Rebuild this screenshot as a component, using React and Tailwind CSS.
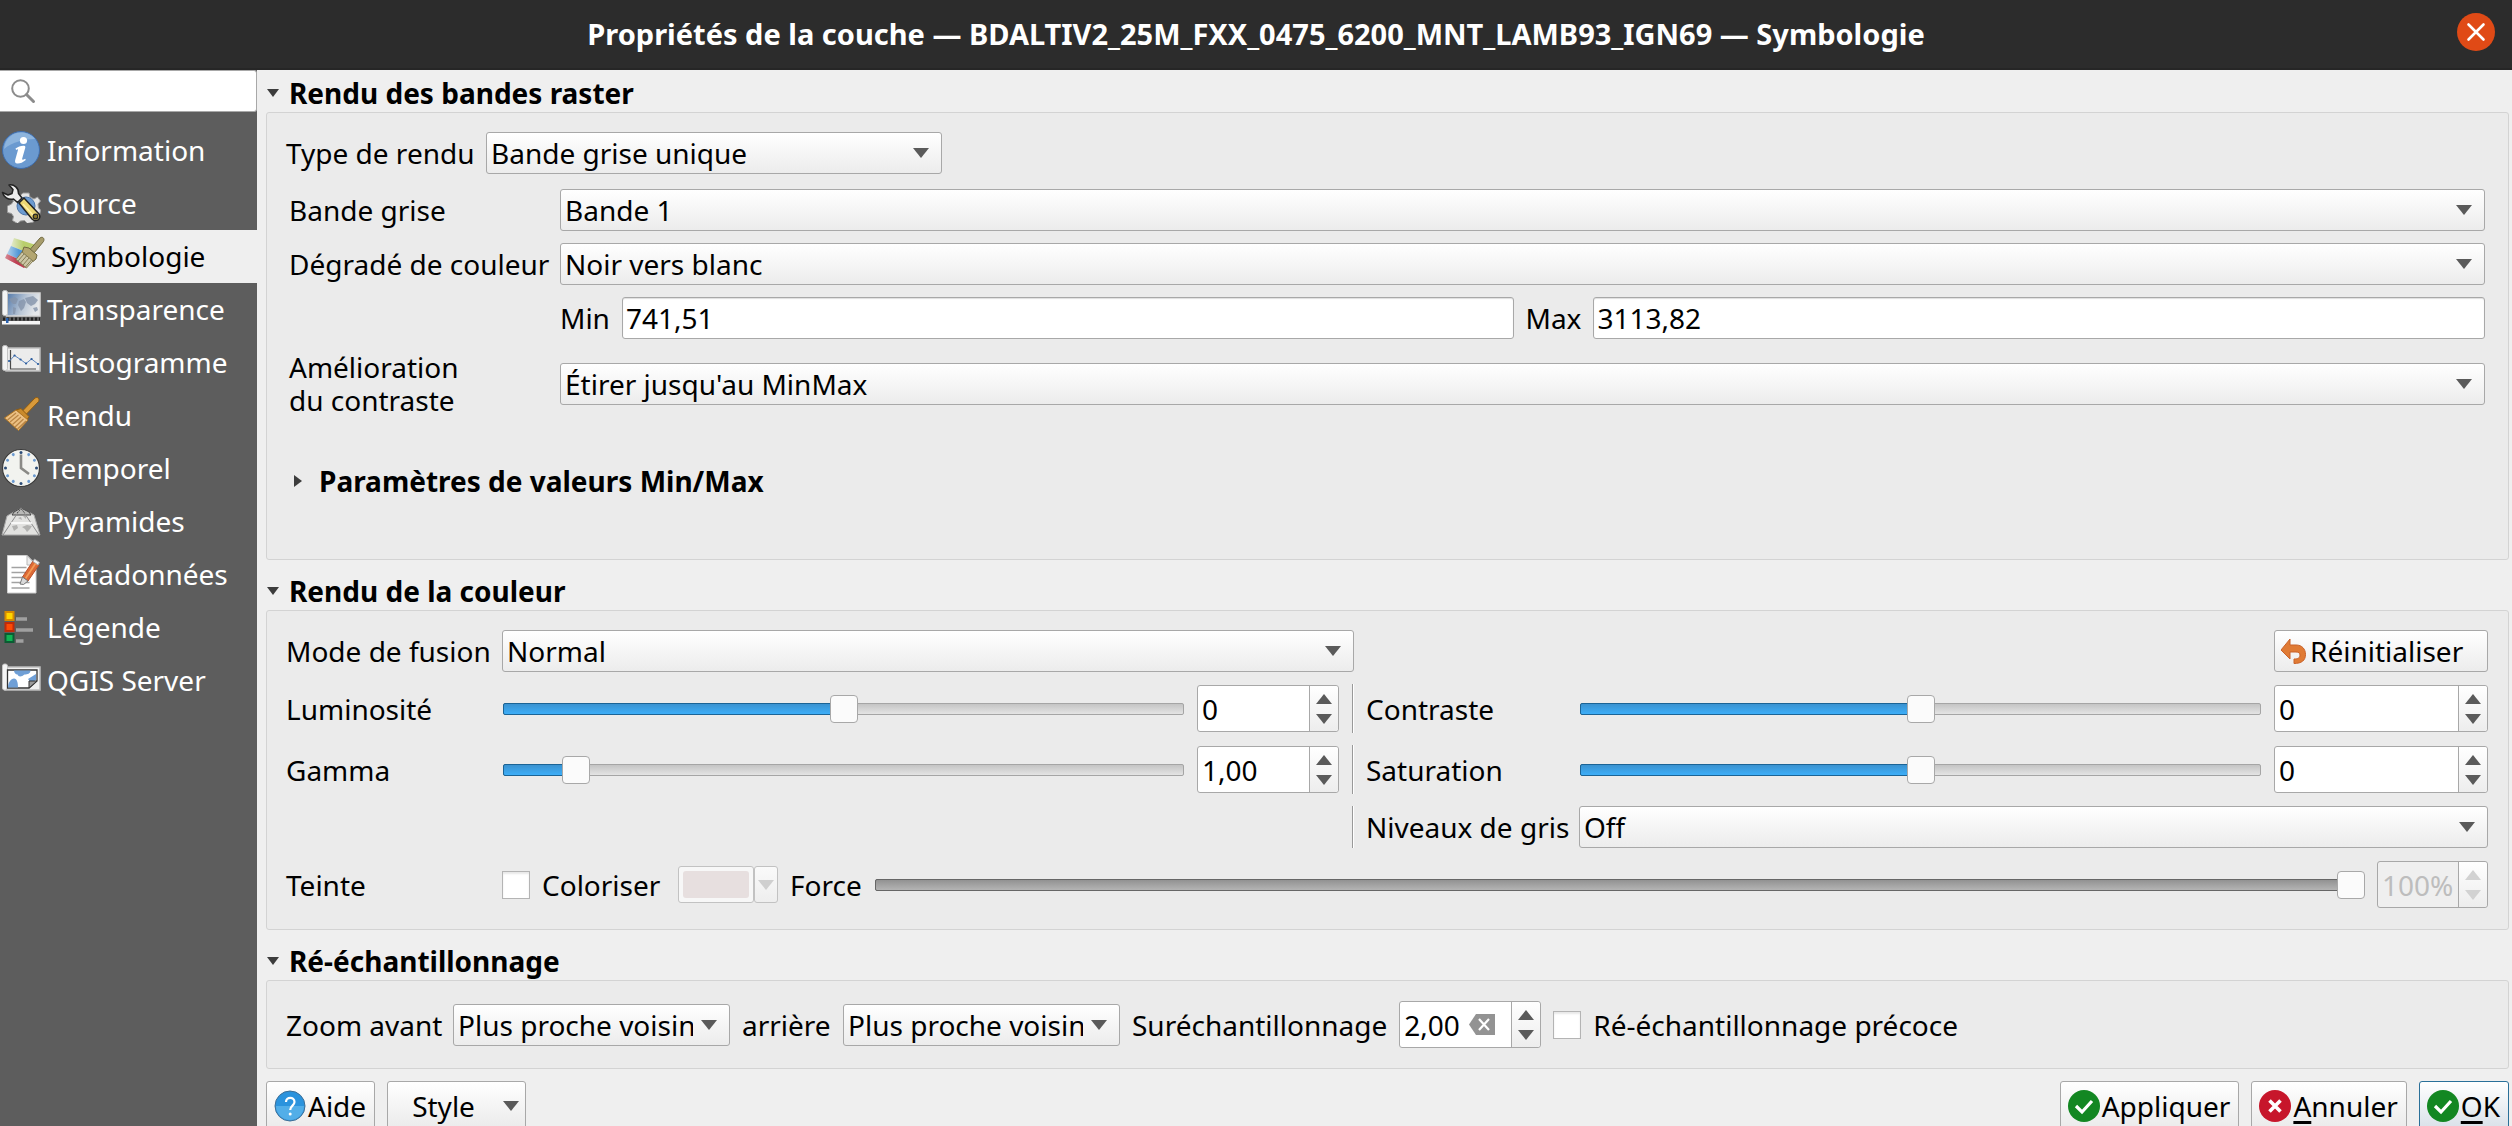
import React, { useState } from "react";

/* ---------- sidebar icons, 40 x 40 ---------- */

const Icon = ({ children }) => (
  <svg viewBox="0 0 40 40" className="h-10 w-10 shrink-0" aria-hidden="true">
    {children}
  </svg>
);

const InfoIcon = () => (
  <Icon>
    <circle cx="20" cy="20" r="18.5" fill="#6b9ad0" stroke="#3f6dac" strokeWidth="1" />
    <path d="M3 19C4 8 12 2.500 20 2.500c6 0 11 2.500 14 6.500C24 9 11 12 3 19z" fill="#8db4dd" />
    <circle cx="22.500" cy="10.500" r="3.600" fill="#fff" />
    <path d="M14.500 18.500c2.500-1.800 5.500-3 8.500-2.800 1.400.1 1.500 1.200 1.200 2.300l-3 10.500c-.4 1.500.6 1.500 3 .2l.6 1.300c-3.200 2.500-5.800 3.700-8.600 3.500-2-.2-2.500-1.500-2-3.500l2.700-9.700c.4-1.400-.3-1.400-1.800-.4z" fill="#fff" />
  </Icon>
);

const SourceIcon = () => (
  <Icon>
    <path
      d="M22 10h6l1 4 4 2 3.500-2 3 4-2.500 3 .5 4 2 2-1 6-4 0-2 3 0 3-6 1.500-3-3-4 .5-3 2.500-5-3 1-4-2-3-4-1V23l4-2 2-3-2-4 4-3 4 2z"
      fill="#e4e4e4"
      stroke="#9a9a9a"
      strokeWidth="1"
    />
    <circle cx="25" cy="23" r="9" fill="#6b9ad0" stroke="#4a74a8" />
    <path d="M18 20l5-5 15 16c2 3 0 7-4 6.500-1 0-2-.5-3-1.500z" fill="#ecd773" stroke="#222" strokeWidth="1.500" />
    <path d="M22 21l10 11" stroke="#fff0a8" strokeWidth="1.500" />
    <circle cx="34.500" cy="33.500" r="2.300" fill="#8a7625" stroke="#222" strokeWidth="1.200" />
    <path d="M8 2c5-1 10 3 9.500 8.500l3.500 4.500-4.500 4.500-4-3.500C7 17 2.500 14 1.500 9.500l5.500 2.500 4-1.500 1-4z" fill="#ececec" stroke="#222" strokeWidth="1.500" strokeLinejoin="round" />
  </Icon>
);

const SymbologyIcon = () => (
  <Icon>
    <defs>
      <linearGradient id="greenStripe" x1="0" y1="0" x2="1" y2="0">
        <stop offset="0" stopColor="#e4ebcf" />
        <stop offset=".5" stopColor="#b9ce6c" />
      </linearGradient>
      <linearGradient id="blueStripe" x1="0" y1="0" x2="1" y2="0">
        <stop offset="0" stopColor="#b5d3ec" />
        <stop offset=".5" stopColor="#4f96d6" />
      </linearGradient>
      <linearGradient id="redStripe" x1="0" y1="0" x2="1" y2="0">
        <stop offset="0" stopColor="#d88a95" />
        <stop offset=".5" stopColor="#bd3f53" />
      </linearGradient>
    </defs>
    <path d="M9 2l22 7-5 9L6 10z" fill="url(#greenStripe)" />
    <path d="M6 10l20 8-4 9L2 18z" fill="url(#blueStripe)" />
    <path d="M2 18l20 9-3 5L0 22z" fill="url(#redStripe)" />
    <path d="M0 22l22 10-1.500 0z" fill="#bd3f53" />
    <path d="M35 2c2.500-2 5 .5 3.500 3.500L29 17l-4-3.500z" fill="#a79c6c" stroke="#6f683f" strokeWidth="1" />
    <path d="M19 11l5 1 8 7-1 4-3 2.500-11-9z" fill="#b3a671" stroke="#6f683f" strokeWidth="1" />
    <path d="M17 16l11 9-6.500 7L11 23.500z" fill="#ccc6a5" stroke="#857d55" strokeWidth="1" />
    <path d="M19 18l-6 7M21.500 20l-6 7M24 22l-6 7M26.500 24l-6 7" stroke="#857d55" strokeWidth="1" />
  </Icon>
);

const TransparencyIcon = () => (
  <Icon>
    <defs>
      <linearGradient id="mapFade" x1="0" y1="0" x2="1" y2=".3">
        <stop offset="0" stopColor="#4f76a8" />
        <stop offset=".6" stopColor="#b9c6d6" />
        <stop offset="1" stopColor="#e6e8ea" />
      </linearGradient>
    </defs>
    <rect x="5.500" y="4" width="33.500" height="23" fill="url(#mapFade)" stroke="#d8d8d8" strokeWidth="1.500" />
    <path d="M8 10l6-2 3 2-2 5-3 0-2-2zM12 18l3 1-1 6h-2zM18 12l5-2 2 3-2 6-3 3-3-6zM24 9l8-2 5 4-3 4-4 2-4-3zM32 19l4-1 1 3-3 2z" fill="#8494aa" opacity=".8" />
    <rect x="1.500" y="1.500" width="5" height="25" rx="2" fill="#f4f4f4" stroke="#c4c4c4" />
    <path d="M2 30h37" stroke="#222" strokeWidth="3" strokeDasharray="2 2" />
    <rect x="1" y="32" width="38" height="3.500" fill="#f5f5f5" />
    <rect x="5" y="29" width="2.500" height="5" fill="#2a62b0" />
  </Icon>
);

const HistogramIcon = () => (
  <Icon>
    <rect x="5" y="6" width="34" height="23" fill="#ececec" stroke="#bdbdbd" strokeWidth="1.500" />
    <rect x="1.500" y="3.500" width="5" height="25" rx="2" fill="#f4f4f4" stroke="#c4c4c4" />
    <path d="M9.500 8v19H35" fill="none" stroke="#4a4a4a" strokeWidth="1.200" />
    <path d="M8.500 19l5-5.500 6 4 5.500 4 5.500-4.500 6.500 5" fill="none" stroke="#5b84bd" strokeWidth="1" />
    <path d="M8 19h.1M13.500 13.500h.1M19.500 17.500h.1M25 21.500h.1M30.500 17h.1M37 22h.1" stroke="#2f5f9f" strokeWidth="2.200" strokeLinecap="round" />
  </Icon>
);

const BrushIcon = () => (
  <Icon>
    <path d="M34 3c2.500-1.500 5 .5 3.500 3.500L24 20.500 20.500 17z" fill="#d99a3a" stroke="#8f5c12" strokeWidth="1" />
    <path d="M15 15l5-1.500 8 8L26 25z" fill="#c98a2c" stroke="#8f5c12" strokeWidth="1" />
    <path d="M15 15l12 10-9.500 10.500L3.500 23z" fill="#ecc083" stroke="#b07522" strokeWidth="1" />
    <path d="M15 18L6.500 25M17.500 20l-8.500 7M20 22l-8.500 7.500M22.500 24l-8.500 8M25 26l-8.500 8" stroke="#b98545" strokeWidth="1.200" />
  </Icon>
);

const CLOCK = [0, 30, 60, 90, 120, 150, 180, 210, 240, 270, 300, 330];
const ClockIcon = () => (
  <Icon>
    <circle cx="20" cy="20" r="18.500" fill="#f2f3ef" stroke="#3d3d3d" strokeWidth="1.200" />
    {CLOCK.map((a) => (
      <circle
        key={a}
        cx="20"
        cy="4.500"
        r="1.500"
        fill={a % 90 === 0 ? "#2c4d78" : "#6b9ad0"}
        transform={`rotate(${a} 20 20)`}
      />
    ))}
    <path d="M20 6.500V20l8 6" fill="none" stroke="#8a8a86" strokeWidth="2.600" />
  </Icon>
);

const PyramidIcon = () => (
  <Icon>
    <path d="M20 7l13 7 6 20H1l5-19z" fill="#e2e2e0" stroke="#a8a8a8" strokeWidth="1" />
    <path d="M13 11l7-4 8 4 2 3H11z" fill="#b9b9b7" stroke="#444" strokeWidth="1" />
    <path d="M20 7L2 34M20 7l18 27" stroke="#8b8b8b" strokeWidth="1" />
    <path d="M10 22h21" stroke="#fff" strokeWidth="1.500" />
    <path d="M11 25l5-1 1 3-4 3zM21 26l5-2 5 1-2 3-3 3-2-3zM17 17l3-1 1 3zM22 15l3 0 0 3z" fill="#b2b2b0" />
    <path d="M16 12l4-4 4 4" fill="none" stroke="#555" strokeWidth="1" strokeDasharray="1.500 1.500" />
  </Icon>
);

const MetadataIcon = () => (
  <Icon>
    <path d="M6.500 1.500H26l9 9V39H6.500z" fill="#fff" stroke="#cfcfcf" />
    <path d="M26 1.500v9.500h9z" fill="#ececec" stroke="#b9b9b9" />
    <path d="M10.500 13.500h15M10.500 18.500h17M10.500 23.500h13M10.500 28.500h18M10.500 34h18" stroke="#a2a2a2" strokeWidth="1.500" />
    <path d="M32 7l6 4-11 16-5.500-4z" fill="#dd6a35" stroke="#b9502a" strokeWidth="1" />
    <path d="M33.500 5l5 3.500-1.500 2.500-5-3.500z" fill="#f3f3f3" stroke="#aaa" strokeWidth="1" />
    <path d="M34.500 9.500l-10 15" stroke="#f39b57" strokeWidth="1.800" />
    <path d="M21.500 23l5.500 4-4.500 3.500-3.500-.5z" fill="#d9d9d9" stroke="#777" strokeWidth="1" />
  </Icon>
);

const LegendIcon = () => (
  <Icon>
    <rect x="4.500" y="5" width="8" height="8" fill="#ffd500" stroke="#d78b00" strokeWidth="2" />
    <rect x="4.500" y="16" width="8" height="8" fill="#fb4b05" stroke="#c02a0a" strokeWidth="2" />
    <rect x="4.500" y="27" width="8" height="8" fill="#10b453" stroke="#0a5c32" strokeWidth="2" />
    <path d="M15 12h11M15 23h17M15 34h7.500" stroke="#a0a0a0" strokeWidth="3.500" />
  </Icon>
);

const ServerIcon = () => (
  <Icon>
    <rect x="4" y="7" width="35" height="23" fill="#f0f0f0" stroke="#bdbdbd" strokeWidth="1.500" />
    <rect x="1.500" y="4" width="5" height="26" rx="2" fill="#f4f4f4" stroke="#c4c4c4" />
    <path d="M6.500 10H36v11l-8 7H6.500z" fill="#fff" stroke="#333" strokeWidth="1.300" />
    <path d="M13 10.500h16.500c0 3-3 4-6 4-3 2.500-6 2.500-7 0-2 0-3.500-2-3.500-4zM7 27.500c0-5 3-9 6-9s4 4 4 9zM27 19l8-5v6l-5 3z" fill="#6f9fd6" />
    <path d="M28 28v-7h8z" fill="#999" stroke="#333" strokeWidth="1" />
  </Icon>
);

const NAV = [
  ["Information", InfoIcon],
  ["Source", SourceIcon],
  ["Symbologie", SymbologyIcon],
  ["Transparence", TransparencyIcon],
  ["Histogramme", HistogramIcon],
  ["Rendu", BrushIcon],
  ["Temporel", ClockIcon],
  ["Pyramides", PyramidIcon],
  ["Métadonnées", MetadataIcon],
  ["Légende", LegendIcon],
  ["QGIS Server", ServerIcon],
];

/* ---------- controls ---------- */

const Down = ({ className = "text-[#5a5a5a]" }) => (
  <svg viewBox="0 0 16 10" className={`h-[10px] w-4 ${className}`} aria-hidden="true">
    <path d="M0 0h16L8 10z" fill="currentColor" />
  </svg>
);
const Up = ({ className = "text-[#5a5a5a]" }) => (
  <svg viewBox="0 0 16 10" className={`h-[10px] w-4 ${className}`} aria-hidden="true">
    <path d="M8 0l8 10H0z" fill="currentColor" />
  </svg>
);

function Combo({ id, label, options, className = "" }) {
  return (
    <div className={`relative ${className}`}>
      <select
        id={id}
        aria-label={label}
        className="block h-[42px] w-full appearance-none overflow-hidden rounded-[3px] border border-[#a8a8a8] bg-linear-to-b from-white to-[#ececec] pr-9 pl-1 text-[28px] leading-[38px] text-black"
      >
        {options.map((o) => (
          <option key={o}>{o}</option>
        ))}
      </select>
      <span className="pointer-events-none absolute inset-y-0 right-[13px] flex items-center">
        <Down />
      </span>
    </div>
  );
}

function Spin({ id, label, value, disabled, clearable, className = "" }) {
  const [v, setV] = useState(value);
  const arrow = disabled ? "text-[#d2d2d2]" : "text-[#5a5a5a]";
  return (
    <div
      className={`flex h-[47px] min-w-0 rounded-[3px] border border-[#a8a8a8] ${
        disabled ? "bg-[#efefef]" : "bg-white"
      } ${className}`}
    >
      <input
        id={id}
        aria-label={label}
        disabled={disabled}
        value={v}
        onChange={(e) => setV(e.target.value)}
        className="w-0 min-w-0 flex-1 bg-transparent pl-1 text-[28px] leading-[38px] text-black disabled:text-[#bdbdbd]"
      />
      {clearable && (
        <button type="button" aria-label="Effacer" className="mr-4 flex items-center" onClick={() => setV("")}>
          <svg viewBox="0 0 26 21" className="h-[21px] w-[26px]" aria-hidden="true">
            <path d="M7 0h19v21H7L0 10.500z" fill="#939393" />
            <path d="M10 5l10 11M20 5L10 16" stroke="#fff" strokeWidth="2.200" />
          </svg>
        </button>
      )}
      <div className="flex w-[29px] flex-col rounded-r-[3px] border-l border-[#a8a8a8] bg-linear-to-b from-white to-[#ededed]">
        <button type="button" aria-label="Augmenter" disabled={disabled} className="flex flex-1 items-end justify-center pb-[5px]">
          <Up className={arrow} />
        </button>
        <button type="button" aria-label="Diminuer" disabled={disabled} className="flex flex-1 items-start justify-center pt-[5px]">
          <Down className={arrow} />
        </button>
      </div>
    </div>
  );
}

function Slider({ id, label, value, disabled, className = "" }) {
  const [v, setV] = useState(value);
  const fill = disabled
    ? "border-[#666] from-[#929292] to-[#b4b4b4]"
    : "border-[#1b6496] from-[#3a92d0] to-[#3daef8]";
  return (
    <div className={`grid items-center ${className}`}>
      <div className="col-start-1 row-start-1 mx-px h-3 rounded-[2px] border border-[#a5a5a5] bg-linear-to-b from-[#c4c4c4] to-[#e4e4e4]">
        <div
          className={`-mt-px -ml-px h-3 rounded-[2px] border bg-linear-to-b ${fill}`}
          style={{ width: `${v / 10}%` }}
        />
      </div>
      <input
        id={id}
        aria-label={label}
        type="range"
        min="0"
        max="1000"
        disabled={disabled}
        value={v}
        onChange={(e) => setV(Number(e.target.value))}
        className="col-start-1 row-start-1 h-7 w-full appearance-none bg-transparent [&::-webkit-slider-thumb]:h-7 [&::-webkit-slider-thumb]:w-7 [&::-webkit-slider-thumb]:appearance-none [&::-webkit-slider-thumb]:rounded-[4px] [&::-webkit-slider-thumb]:border [&::-webkit-slider-thumb]:border-[#a8a8a8] [&::-webkit-slider-thumb]:bg-[#fbfbfb]"
      />
    </div>
  );
}

const Check = ({ id }) => (
  <input
    id={id}
    type="checkbox"
    className="h-7 w-7 shrink-0 appearance-none border border-[#b4b4b4] bg-white shadow-[inset_0_2px_2px_#e8e8e8]"
  />
);

const Separator = ({ className = "" }) => (
  <div className={`h-full w-[2px] justify-self-center border-r border-l border-r-white border-l-[#999] ${className}`} />
);

const Field = ({ id, value }) => (
  <input
    id={id}
    defaultValue={value}
    className="h-[42px] min-w-0 flex-1 rounded-[3px] border border-[#a8a8a8] bg-white pl-[3px] text-[28px] leading-[38px] shadow-[inset_0_1px_1px_#dedede]"
  />
);

function Section({ title, children, first }) {
  return (
    <section>
      <button type="button" className={`flex h-[38px] items-center font-bold ${first ? "mt-1" : "mt-3"}`}>
        <svg viewBox="0 0 12 8" className="mr-[10px] ml-[1px] h-2 w-3" aria-hidden="true">
          <path d="M0 0h12L6 8z" fill="#3c3c3c" />
        </svg>
        {title}
      </button>
      <div className="rounded-[3px] border border-[#d3d3d3] bg-[#ebebeb] pr-5 pl-[19px]">{children}</div>
    </section>
  );
}

const FOOT =
  "flex h-[50px] items-center rounded-[3px] border border-[#a8a8a8] bg-linear-to-b from-white to-[#eaeaea]";

const OkBadge = () => (
  <svg viewBox="0 0 32 32" className="mr-[2px] h-8 w-8" aria-hidden="true">
    <circle cx="16" cy="16" r="16" fill="#138722" />
    <path d="M8 16l6 6 10-11" fill="none" stroke="#fff" strokeWidth="3.200" />
  </svg>
);

const Mnemonic = ({ children }) => (
  <span className="underline decoration-3 underline-offset-4">{children}</span>
);

export default function App() {
  return (
    <div className="flex h-screen flex-col overflow-hidden bg-[#efefef] font-['Noto_Sans',sans-serif] text-[28px] leading-[38px] whitespace-nowrap text-black">
      {/* title bar */}
      <header className="grid h-[70px] shrink-0 grid-cols-[64px_1fr_64px] items-center border-b-2 border-[#262626] bg-[#2c2c2c] text-white">
        <h1 className="col-start-2 text-center text-[29px] font-bold">
          Propriétés de la couche — BDALTIV2_25M_FXX_0475_6200_MNT_LAMB93_IGN69 — Symbologie
        </h1>
        <button type="button" aria-label="Fermer" className="mb-1 ml-[9px] h-[38px] w-[38px] rounded-full bg-[#e04a16]">
          <svg viewBox="0 0 38 38" aria-hidden="true">
            <path d="M11.500 11.500l15 15M26.500 11.500l-15 15" stroke="#fff" strokeWidth="2.600" strokeLinecap="round" />
          </svg>
        </button>
      </header>

      <div className="flex min-h-0 flex-1">
        {/* sidebar */}
        <aside className="w-[257px] shrink-0 bg-[#5d5d5d]">
          <label className="flex h-[42px] items-center rounded-r-[3px] border border-l-0 border-[#a8a8a8] bg-white pl-[11px]">
            <svg viewBox="0 0 25 25" className="h-[25px] w-[25px] shrink-0" fill="none" stroke="#8c8c8c" aria-hidden="true">
              <circle cx="9.500" cy="9.500" r="8.300" strokeWidth="2" />
              <path d="M15.500 15.500l7 7" strokeWidth="3" strokeLinecap="round" />
            </svg>
            <input aria-label="Rechercher" className="ml-2 w-full min-w-0 bg-transparent" />
          </label>
          <nav className="mt-3 flex flex-col">
            {NAV.map(([name, Ic]) => (
              <a
                key={name}
                href="#"
                className={`flex h-[53px] items-center gap-1.5 pb-0.5 ${
                  name === "Symbologie" ? "bg-[#efefef] pl-[5px] text-black" : "pl-px text-white"
                }`}
              >
                <Ic />
                {name}
              </a>
            ))}
          </nav>
        </aside>

        {/* settings */}
        <main className="flex min-w-0 flex-1 flex-col pr-[3px] pl-[9px]">
          <Section title="Rendu des bandes raster" first>
            <div className="flex items-center gap-3 pt-[19px]">
              <label htmlFor="type" className="w-[188px]">Type de rendu</label>
              <Combo id="type" className="w-[456px]" options={["Bande grise unique"]} />
            </div>
            <div className="mt-[15px] grid grid-cols-[259px_1fr] items-center gap-3 px-[3px]">
              <label htmlFor="band">Bande grise</label>
              <Combo id="band" options={["Bande 1"]} />
              <label htmlFor="grad">Dégradé de couleur</label>
              <Combo id="grad" options={["Noir vers blanc"]} />
              <div className="col-start-2 flex items-center">
                <label htmlFor="min" className="mr-3">Min</label>
                <Field id="min" value="741,51" />
                <label htmlFor="max" className="mr-3 ml-3">Max</label>
                <Field id="max" value="3113,82" />
              </div>
              <label htmlFor="contrast" className="leading-[33px]">
                Amélioration
                <br />
                du contraste
              </label>
              <Combo id="contrast" options={["Étirer jusqu'au MinMax"]} />
            </div>
            <button type="button" className="mt-[45px] mb-[59px] flex items-center pl-2 font-bold">
              <svg viewBox="0 0 8 12" className="mr-[17px] h-3 w-2" aria-hidden="true">
                <path d="M0 0l8 6-8 6z" fill="#3c3c3c" />
              </svg>
              Paramètres de valeurs Min/Max
            </button>
          </Section>

          <Section title="Rendu de la couleur">
            <div className="grid grid-cols-[204px_1fr_142px_3px_201px_1fr_214px] grid-rows-[42px_49px_49px_42px_49px] items-center gap-3 pt-[19px] pb-5">
              <label htmlFor="blend">Mode de fusion</label>
              <Combo id="blend" className="col-span-3" options={["Normal"]} />
              <button
                type="button"
                className="col-start-7 flex h-[42px] items-center rounded-[3px] border border-[#a8a8a8] bg-linear-to-b from-white to-[#ececec] pl-1.5"
              >
                <svg viewBox="0 0 25 25" className="mr-1 h-[25px] w-[25px]" aria-hidden="true">
                  <path
                    d="M0 11L9 0v6h6c6 0 9.500 4 9.500 9.500 0 6-4 9-11.500 9v-4.500c4 0 6-1 6-4 0-2-1.500-3-4-3H9v7z"
                    fill="#e07b35"
                    stroke="#c9622a"
                    strokeWidth="1"
                  />
                </svg>
                Réinitialiser
              </button>

              <label htmlFor="lum">Luminosité</label>
              <Slider id="lum" value={500} />
              <Spin label="Luminosité" value="0" />
              <Separator />
              <label htmlFor="con">Contraste</label>
              <Slider id="con" value={500} />
              <Spin label="Contraste" value="0" />

              <label htmlFor="gam">Gamma</label>
              <Slider id="gam" value={92} />
              <Spin label="Gamma" value="1,00" />
              <Separator />
              <label htmlFor="sat">Saturation</label>
              <Slider id="sat" value={500} />
              <Spin label="Saturation" value="0" />

              <Separator className="col-start-4" />
              <label htmlFor="grey">Niveaux de gris</label>
              <Combo id="grey" className="col-span-2" options={["Off"]} />

              <span>Teinte</span>
              <div className="col-span-6 flex items-center gap-3">
                <span className="flex w-[164px] items-center gap-3">
                  <Check id="colorize" />
                  <label htmlFor="colorize">Coloriser</label>
                </span>
                <span className="flex">
                  <button type="button" disabled aria-label="Couleur" className="h-[37px] w-[76px] rounded-[3px] border border-[#c2c2c2] bg-[#f7f7f7] p-1">
                    <span className="block h-full rounded-[3px] bg-[#e7dfdf]" />
                  </button>
                  <button type="button" disabled aria-label="Choisir une couleur" className="flex h-[37px] w-6 items-center justify-center rounded-[3px] border border-[#c2c2c2] bg-linear-to-b from-[#fafafa] to-[#eee]">
                    <Down className="text-[#cfcfcf]" />
                  </button>
                </span>
                <label htmlFor="force">Force</label>
                <Slider id="force" value={1000} disabled className="flex-1" />
                <Spin label="Force" value="100%" disabled className="w-[111px]" />
              </div>
            </div>
          </Section>

          <Section title="Ré-échantillonnage">
            <div className="flex items-center gap-3 py-5">
              <label htmlFor="zin" className="w-[155px]">Zoom avant</label>
              <Combo id="zin" className="w-[277px]" options={["Plus proche voisin"]} />
              <label htmlFor="zout" className="w-[89px]">arrière</label>
              <Combo id="zout" className="w-[277px]" options={["Plus proche voisin"]} />
              <label htmlFor="over">Suréchantillonnage</label>
              <Spin id="over" value="2,00" clearable className="w-[142px]" />
              <Check id="early" />
              <label htmlFor="early">Ré-échantillonnage précoce</label>
            </div>
          </Section>

          {/* dialog buttons */}
          <footer className="mt-3 flex shrink-0 items-start">
            <button type="button" className={`${FOOT} pr-2 pl-[7px]`}>
              <svg viewBox="0 0 32 32" className="mr-[2px] h-8 w-8" aria-hidden="true">
                <circle cx="16" cy="16" r="15" fill="#2b93dd" stroke="#3e6f96" strokeWidth="1" />
                <path d="M2 16a14 14 0 0 0 28 0z" fill="#52aee8" />
                <path d="M12 12c0-5.500 8.500-5.500 8.500 0 0 3.500-4.300 3.800-4.300 8" fill="none" stroke="#fff" strokeWidth="2.200" />
                <circle cx="16.200" cy="24" r="1.500" fill="#fff" />
              </svg>
              Aide
            </button>
            <button type="button" className={`${FOOT} ml-3 gap-7 pr-1.5 pl-6`}>
              Style
              <Down />
            </button>
            <span className="flex-1" />
            <button type="button" className={`${FOOT} pr-2 pl-[7px]`}>
              <OkBadge />
              Appliquer
            </button>
            <button type="button" className={`${FOOT} ml-3 pr-2 pl-[7px]`}>
              <svg viewBox="0 0 32 32" className="mr-[2px] h-8 w-8" aria-hidden="true">
                <circle cx="16" cy="16" r="16" fill="#c7162b" />
                <path d="M10.500 10.500l11 11M21.500 10.500l-11 11" stroke="#fff" strokeWidth="3.600" />
              </svg>
              <span>
                <Mnemonic>A</Mnemonic>nnuler
              </span>
            </button>
            <button
              type="button"
              className="ml-3 flex h-[50px] items-center rounded-[3px] border border-[#2a7099] bg-linear-to-b from-white to-[#d8e0e8] pr-2 pl-[7px]"
            >
              <OkBadge />
              <span>
                <Mnemonic>O</Mnemonic>K
              </span>
            </button>
          </footer>
        </main>
      </div>
    </div>
  );
}
